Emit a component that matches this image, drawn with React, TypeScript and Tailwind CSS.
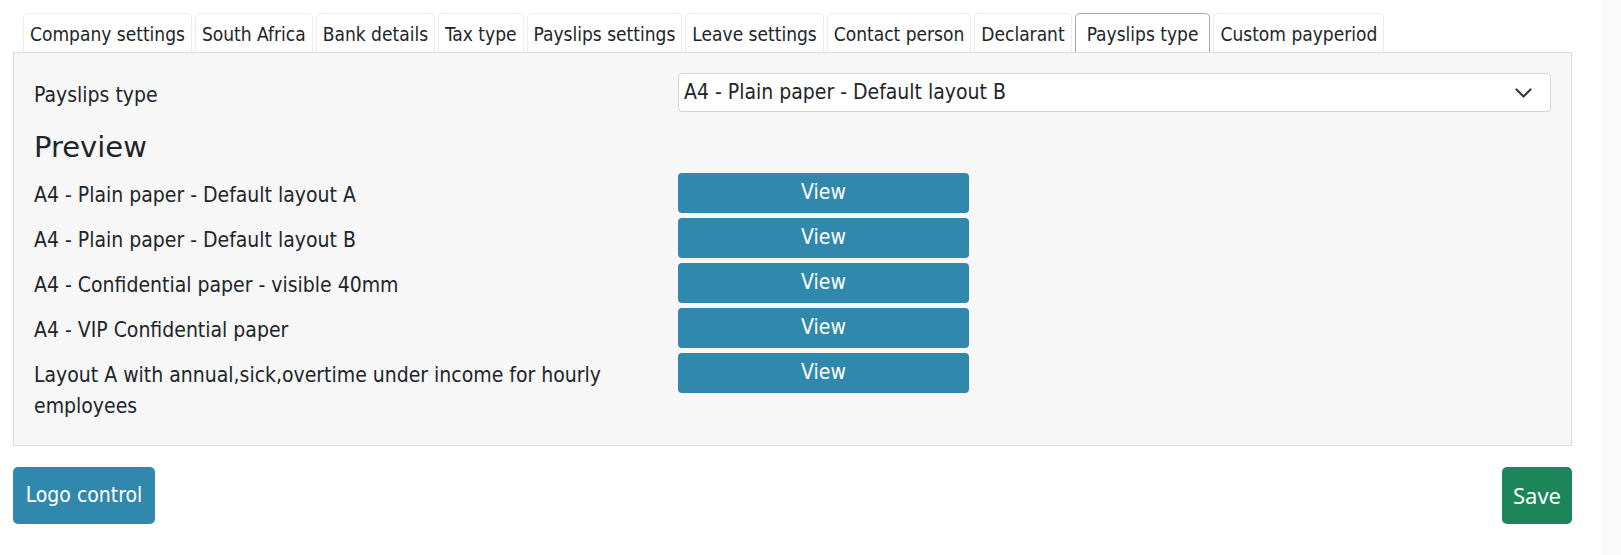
import { useState } from "react";

const tabs = [
    "Company settings",
    "South Africa",
    "Bank details",
    "Tax type",
    "Payslips settings",
    "Leave settings",
    "Contact person",
    "Declarant",
    "Payslips type",
    "Custom payperiod",
];

const layouts = [
    "A4 - Plain paper - Default layout A",
    "A4 - Plain paper - Default layout B",
    "A4 - Confidential paper - visible 40mm",
    "A4 - VIP Confidential paper",
    "Layout A with annual,sick,overtime under income for hourly employees",
];

const Tab = (props: { name: string; active: boolean }) => {
    const { name, active } = props;
    return (
        <li
            className={`h-[39px] border border-b-0 rounded-t-[5px] bg-white pt-[9px] leading-[22px] text-[19px] whitespace-nowrap ${
                active ? "border-[#a8a8a8] px-[11px]" : "border-[#ececec] px-[6px]"
            }`}
        >
            {name}
        </li>
    );
};

const PreviewRow = (props: { label: string }) => {
    return (
        <div className="flex items-start">
            <p className="w-[644px] pr-[24px] pt-[7px] leading-[31px] text-[21px]">{props.label}</p>
            <button type="button" className="w-[291px] h-[40px] mb-[5px] rounded-[4px] bg-[#3089ad] text-white text-[21px]">
                View
            </button>
        </div>
    );
};

export default function App() {
    const [selected] = useState<string>("A4 - Plain paper - Default layout B");

    return (
        <div className="flex min-h-[555px] bg-white text-[#212529] font-[family-name:'DejaVu_Sans_Condensed','DejaVu_Sans',sans-serif]">
            <div className="w-[1602px] pl-[13px] pr-[30px]">
                <ul className="flex items-end gap-[3px] pt-[13px] pl-[10px]">
                    {tabs.map((tab) => (
                        <Tab key={tab} name={tab} active={tab === "Payslips type"} />
                    ))}
                </ul>
                <div className="border border-[#dcdcdc] bg-[#f7f7f7] px-[20px] pt-[20px] pb-[23px]">
                    <div className="flex items-center">
                        <label className="w-[644px] pt-[6px] leading-[31px] text-[21px]">Payslips type</label>
                        <div className="relative w-[873px] h-[39px] rounded-[4px] border border-[#d3d3d3] bg-white flex items-center pl-[5px] text-[21px]">
                            <span>{selected}</span>
                            <svg className="absolute right-[18px] top-[14px]" width="17" height="11" viewBox="0 0 17 11" fill="none">
                                <path d="M1.5 1.5 8.5 8.5 15.5 1.5" stroke="#343a40" strokeWidth="2.2" strokeLinecap="round" strokeLinejoin="round" />
                            </svg>
                        </div>
                    </div>
                    <h2 className="mt-[17px] h-[36px] leading-[36px] text-[29px] font-['DejaVu_Sans',sans-serif]">Preview</h2>
                    <div className="mt-[8px]">
                        {layouts.map((layout) => (
                            <PreviewRow key={layout} label={layout} />
                        ))}
                    </div>
                </div>
                <div className="mt-[21px] flex justify-between">
                    <button type="button" className="h-[57px] w-[142px] rounded-[5px] bg-[#3089ad] text-white text-[21px]">
                        Logo control
                    </button>
                    <button type="button" className="h-[57px] w-[70px] rounded-[5px] bg-[#1c855a] text-white text-[22px] font-['Noto_Sans',sans-serif]">
                        Save
                    </button>
                </div>
            </div>
            <div className="w-[19px] bg-[#fafafa]" />
        </div>
    );
}
